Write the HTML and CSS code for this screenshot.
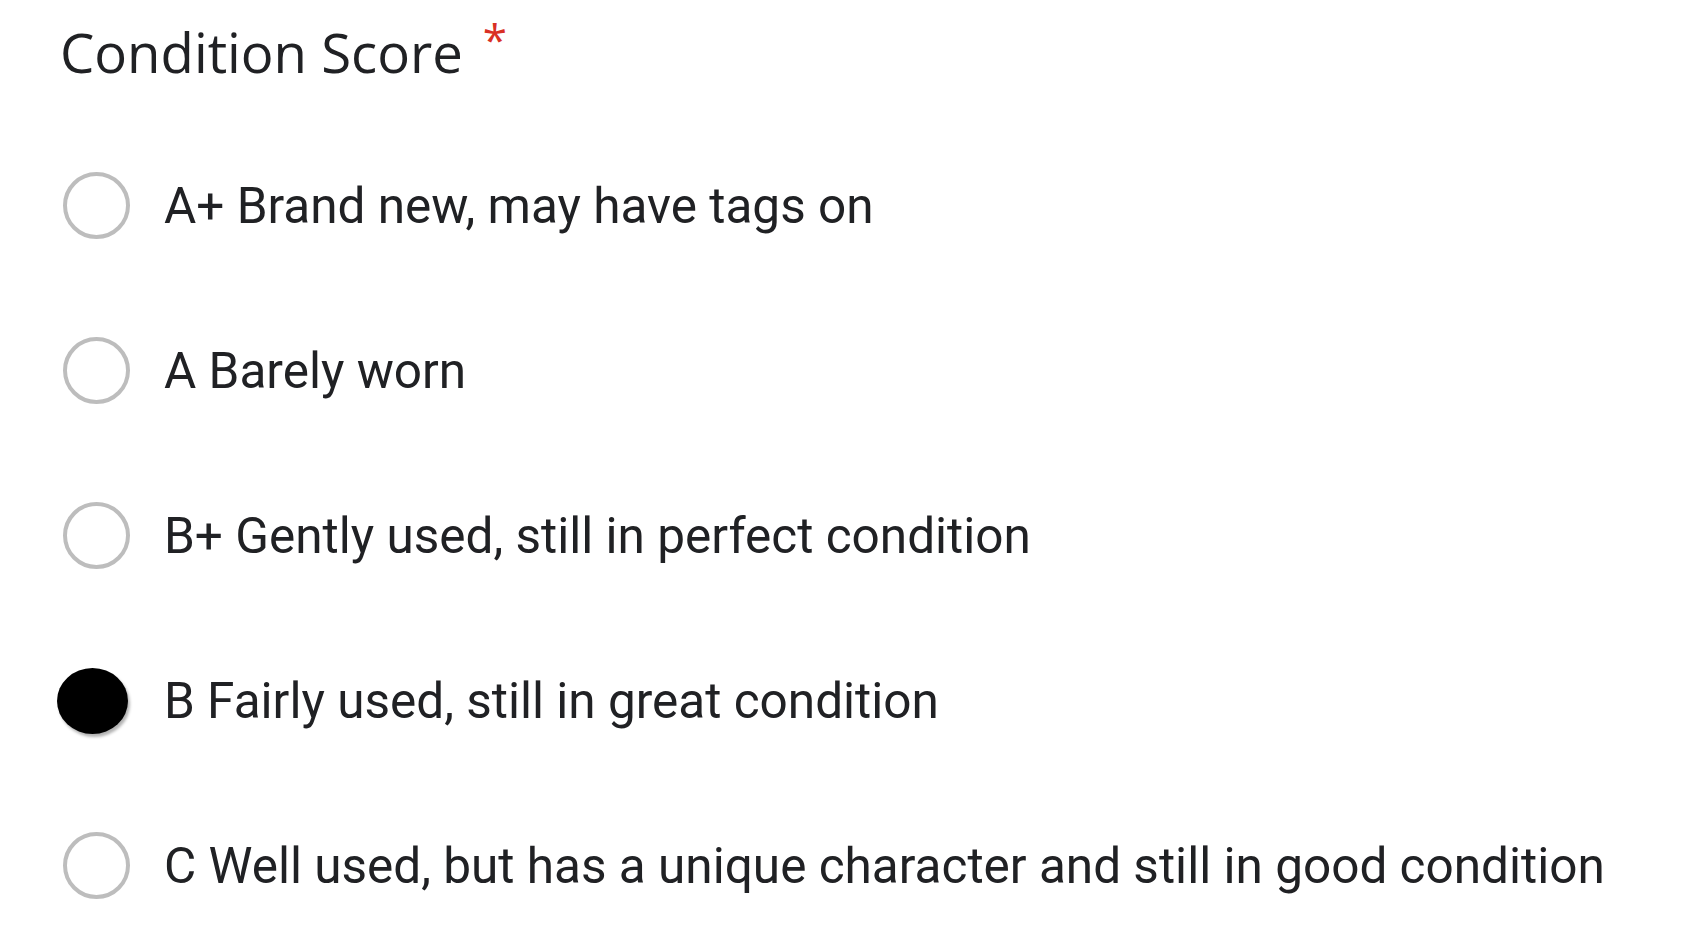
FILE: index.html
```html
<!DOCTYPE html>
<html>
<head>
<meta charset="utf-8">
<link rel="stylesheet" href="styles.css">
</head>
<body>
<div class="form">
  <div class="title">Condition Score<span class="req">*</span></div>
  <div class="options">
    <div class="opt"><span class="radio"></span><span class="label">A+ Brand new, may have tags on</span></div>
    <div class="opt"><span class="radio"></span><span class="label">A Barely worn</span></div>
    <div class="opt"><span class="radio"></span><span class="label">B+ Gently used, still in perfect condition</span></div>
    <div class="opt"><span class="radio filled"></span><span class="label">B Fairly used, still in great condition</span></div>
    <div class="opt"><span class="radio"></span><span class="label">C Well used, but has a unique character and still in good condition</span></div>
  </div>
</div>
</body>
</html>
```
FILE: styles.css
```css
html, body {
  margin: 0;
  padding: 0;
  background: #ffffff;
}
.form {
  padding-left: 58px;
  color: #202124;
}
.title {
  font-family: "Open Sans", sans-serif;
  font-size: 54.5px;
  font-weight: 500;
  height: 123px;
  line-height: 104px;
  padding-left: 2px;
  color: #202124;
}
.req {
  color: #d93025;
  font-size: 44px;
  font-weight: 400;
  position: relative;
  top: -17px;
  margin-left: 20px;
}
.options {
  display: flex;
  flex-direction: column;
}
.opt {
  height: 165px;
  display: flex;
  align-items: center;
}
.radio {
  box-sizing: border-box;
  width: 67px;
  height: 67px;
  border-radius: 50%;
  border: 4px solid #bdbdbd;
  margin-left: 5px;
  flex: none;
}
.radio.filled {
  width: 71px;
  height: 66px;
  margin-left: -1px;
  margin-right: 2px;
  border: none;
  background: #000;
  box-shadow: 2px 3px 3px rgba(0,0,0,0.3);
}
.label {
  font-family: Roboto, sans-serif;
  font-size: 49.5px;
  margin-left: 34px;
  color: #202124;
  white-space: nowrap;
}
```
